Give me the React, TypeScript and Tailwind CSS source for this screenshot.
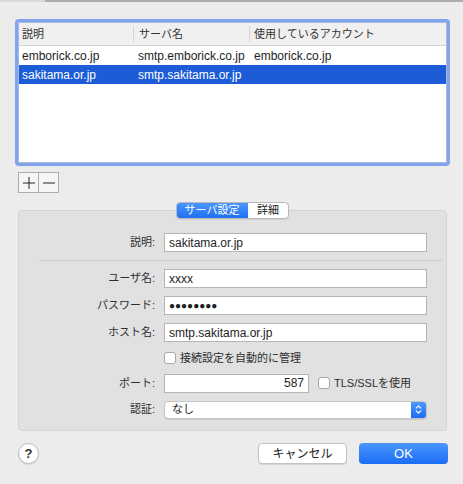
import { ChevronsUpDown } from "lucide-react";

const rows = [
  { desc: "emborick.co.jp", server: "smtp.emborick.co.jp", account: "emborick.co.jp", selected: false },
  { desc: "sakitama.or.jp", server: "smtp.sakitama.or.jp", account: "", selected: true },
];

const font = { fontFamily: '"Liberation Sans", "Noto Sans CJK JP", sans-serif' };

const Label = ({ children }: { children: React.ReactNode }) => (
  <div className="w-[137px] text-right text-[11px] text-[#2e2e2e] pr-[1px]">{children}</div>
);

const Field = ({ label, value }: { label: string; value: string }) => (
  <div className="flex items-center h-[19px]">
    <Label>{label}</Label>
    <div className="ml-[8px] flex-1 h-[19px] bg-white border border-[#b5b5b5] flex items-center px-[4px] text-[12px] text-[#1e1e1e]">
      {value}
    </div>
  </div>
);

const Check = () => (
  <span className="inline-block w-[12px] h-[12px] rounded-[3px] border border-[#a8a8a8] bg-white" />
);

export default function App() {
  return (
    <div className="w-[463px] h-[484px] bg-[#ececec] overflow-hidden relative" style={font}>
      {/* top edge */}
      <div className="flex h-[2px]">
        <div className="w-[45px] bg-[#d9d9d9]" />
        <div className="flex-1 bg-[#acacac]" />
      </div>

      {/* account table */}
      <div className="ml-[15px] mt-[17px] w-[435px] h-[147px] rounded-[4px] bg-[#82a4ec] p-[3px]">
        <div className="h-full bg-white border border-[#a9b9dc]">
          <div className="flex h-[23px] bg-[#f0f0f0] border-b border-[#d3d3d3] text-[11px] text-[#333]">
            <div className="w-[115px] flex items-center pl-[3px] border-r border-[#d6d6d6] my-[3px]">説明</div>
            <div className="w-[116px] flex items-center pl-[5px] border-r border-[#d6d6d6] my-[3px]">サーバ名</div>
            <div className="flex-1 flex items-center pl-[4px]">使用しているアカウント</div>
          </div>
          {rows.map((r) => (
            <div
              key={r.desc}
              className={`flex h-[19px] items-center text-[12px] ${r.selected ? "bg-[#1c5cd6] text-white" : "text-[#1e1e1e]"}`}
            >
              <div className="w-[115px] pl-[3px]">{r.desc}</div>
              <div className="w-[116px] pl-[4px]">{r.server}</div>
              <div className="flex-1 pl-[4px]">{r.account}</div>
            </div>
          ))}
        </div>
      </div>

      {/* + / - */}
      <div className="ml-[18px] mt-[6px] flex">
        <button className="w-[21px] h-[21px] border border-[#acacac] bg-[#f6f6f6] flex items-center justify-center">
          <svg width="12" height="12" viewBox="0 0 12 12"><path d="M6 0v12M0 6h12" stroke="#222" strokeWidth="1" /></svg>
        </button>
        <button className="w-[20px] h-[21px] border border-l-0 border-[#acacac] bg-[#f6f6f6] flex items-center justify-center">
          <svg width="12" height="12" viewBox="0 0 12 12"><path d="M0 6h12" stroke="#222" strokeWidth="1" /></svg>
        </button>
      </div>

      {/* tabs */}
      <div className="mt-[9px] flex justify-center pl-[2px] relative z-10">
        <div className="flex h-[17px] rounded-[4px] overflow-hidden border border-[#b9b9b9] bg-white shadow-[0_1px_1px_rgba(0,0,0,0.08)] text-[11px]">
          <div className="w-[72px] -my-[1px] -ml-[1px] bg-gradient-to-b from-[#4d98fd] to-[#1b6df4] text-white flex items-center justify-center rounded-l-[4px]">
            サーバ設定
          </div>
          <div className="w-[40px] flex items-center justify-center text-[#222]">詳細</div>
        </div>
      </div>

      {/* settings box */}
      <div className="ml-[18px] -mt-[9px] w-[429px] h-[221px] rounded-[4px] bg-[#e1e1e1] border border-[#d5d5d5] pt-[22px] pr-[19px]">
        <Field label="説明:" value="sakitama.or.jp" />
        <div className="ml-[20px] mr-[-15px] mt-[8px] mb-[8px] h-px bg-[#cacaca]" />
        <div className="flex flex-col gap-[8px]">
          <Field label="ユーザ名:" value="xxxx" />
          <div className="flex items-center h-[19px]">
            <Label>パスワード:</Label>
            <div className="ml-[8px] flex-1 h-[19px] bg-white border border-[#b5b5b5] flex items-center px-[4px] text-[10px] text-[#1e1e1e]">
              ●●●●●●●●
            </div>
          </div>
          <Field label="ホスト名:" value="smtp.sakitama.or.jp" />
        </div>
        <div className="mt-[8px] ml-[145px] flex items-center gap-[4px] text-[11px] text-[#2e2e2e]">
          <Check />
          <span>接続設定を自動的に管理</span>
        </div>
        <div className="mt-[7px] flex items-center h-[19px]">
          <Label>ポート:</Label>
          <div className="ml-[8px] w-[145px] h-[19px] bg-white border border-[#b5b5b5] flex items-center justify-end px-[4px] text-[12px] text-[#1e1e1e]">
            587
          </div>
          <div className="ml-[9px] flex items-center gap-[4px] text-[11px] text-[#2e2e2e]">
            <Check />
            <span>TLS/SSLを使用</span>
          </div>
        </div>
        <div className="mt-[8px] flex items-center h-[18px]">
          <Label>認証:</Label>
          <div className="ml-[8px] flex-1 h-[18px] bg-white rounded-[4px] border border-[#c4c4c4] flex items-center text-[11px] text-[#1e1e1e] overflow-hidden shadow-[0_1px_1px_rgba(0,0,0,0.1)]">
            <span className="flex-1 pl-[7px]">なし</span>
            <span className="w-[15px] h-full bg-gradient-to-b from-[#4d98fd] to-[#1b6df4] flex items-center justify-center">
              <ChevronsUpDown size={11} color="white" strokeWidth={2.5} />
            </span>
          </div>
        </div>
      </div>

      {/* bottom buttons */}
      <div className="mt-[12px] ml-[18px] mr-[15px] flex items-center">
        <button className="w-[21px] h-[21px] rounded-full bg-white border border-[#bdbdbd] shadow-[0_1px_1px_rgba(0,0,0,0.1)] text-[13px] font-bold text-[#333] flex items-center justify-center">
          ?
        </button>
        <div className="flex-1" />
        <button className="w-[89px] h-[21px] rounded-[4px] bg-white border border-[#c3c3c3] shadow-[0_1px_1px_rgba(0,0,0,0.1)] text-[12px] text-[#222]">
          キャンセル
        </button>
        <button className="ml-[12px] w-[89px] h-[21px] rounded-[4px] bg-gradient-to-b from-[#4a96fd] to-[#1a6cf5] text-white text-[13px]">
          OK
        </button>
      </div>
    </div>
  );
}
